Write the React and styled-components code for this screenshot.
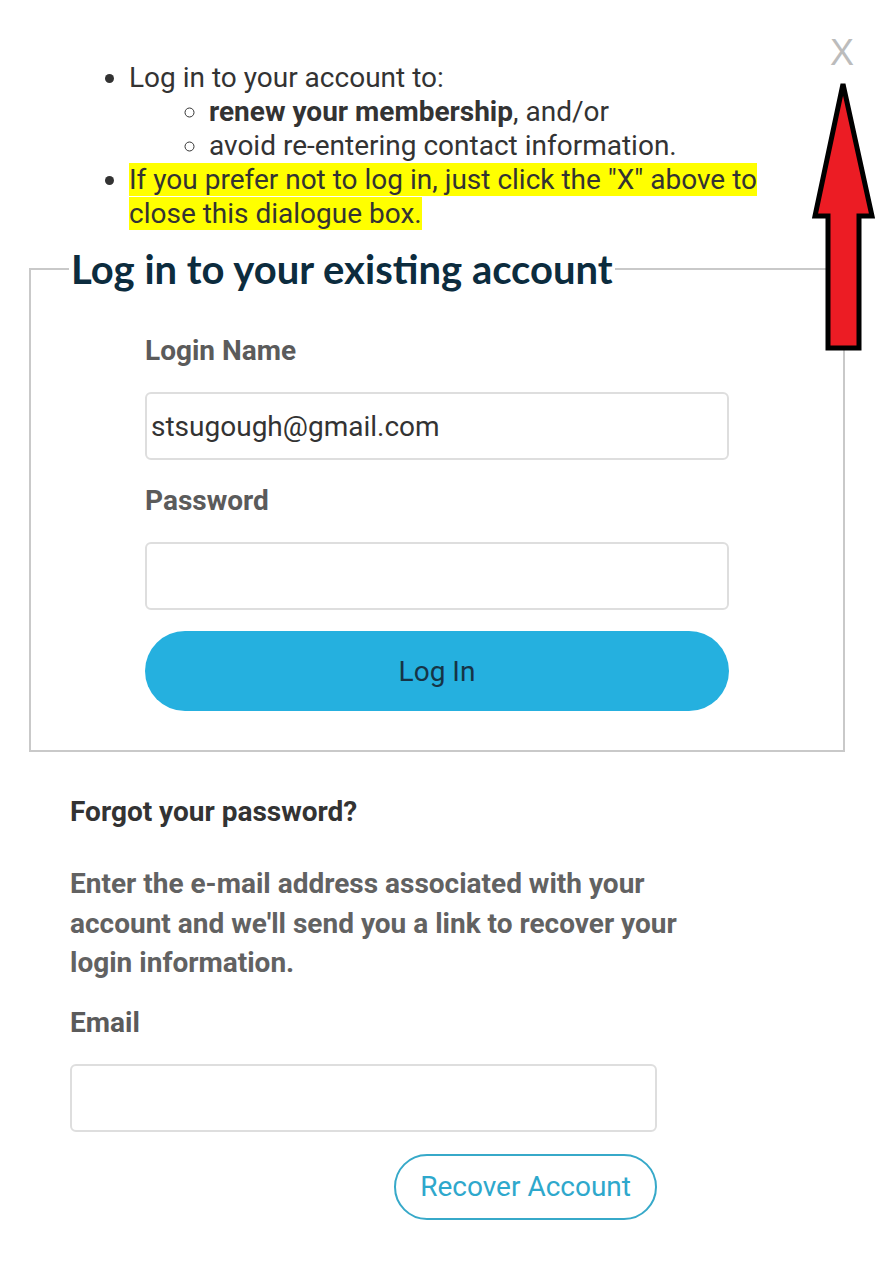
import React from "react";
import styled, { createGlobalStyle } from "styled-components";

const Global = createGlobalStyle`
  html, body { margin: 0; padding: 0; background: #fff; }
  body { font-family: Roboto, "Liberation Sans", Arial, sans-serif; }
  * { box-sizing: border-box; }
`;

const Page = styled.div`
  position: relative;
  width: 878px;
  min-height: 1282px;
  padding-top: 61px;
  overflow: hidden;
`;

const CloseX = styled.button`
  position: absolute;
  top: 30px;
  right: 24px;
  border: 0;
  background: none;
  padding: 0;
  font-family: "Liberation Sans", Arial, sans-serif;
  font-size: 36px;
  line-height: 46px;
  color: #bcbcbc;
  cursor: pointer;
`;

const ArrowWrap = styled.div`
  position: absolute;
  top: 80px;
  left: 811px;
  width: 66px;
  height: 272px;
  pointer-events: none;
`;

const IntroList = styled.ul`
  margin: 0;
  padding-left: 129px;
  padding-right: 100px;
  list-style: disc;
  font-size: 28px;
  line-height: 34px;
  color: #333;
`;

const SubList = styled.ul`
  margin: 0;
  padding-left: 80px;
  list-style: circle;
`;

const Item = styled.li``;

const Mark = styled.span`
  background: #ffff00;
`;

const Fieldset = styled.fieldset`
  margin: 15px 0 0 29px;
  width: 816px;
  border: 2px solid #c9c9c9;
  padding: 39px 0 39px 38px;
`;

const Legend = styled.legend`
  padding: 0 2px;
  font-family: Lato, "Open Sans", sans-serif;
  font-weight: 700;
  font-size: 40px;
  line-height: 46px;
  color: #0c2c3e;
`;

const FormBody = styled.div`
  width: ${(p) => p.$width}px;
  margin-left: ${(p) => p.$indent || 0}px;
  display: flex;
  flex-direction: column;
`;

const Label = styled.label`
  display: block;
  font-weight: 700;
  font-size: 28px;
  line-height: 40px;
  color: #5b5b5b;
  margin-bottom: 21px;
`;

const Input = styled.input`
  display: block;
  width: 100%;
  height: 68px;
  border: 2px solid #dedede;
  border-radius: 6px;
  padding: 0 4px;
  font-family: Roboto, sans-serif;
  font-size: 28px;
  color: #333;
  margin-bottom: 21px;
  outline: none;
`;

const PrimaryButton = styled.button`
  width: 100%;
  height: 80px;
  border: 0;
  border-radius: 40px;
  background: #25b0df;
  font-family: Roboto, sans-serif;
  font-size: 28px;
  color: #163446;
  cursor: pointer;
`;

const Recover = styled.section`
  width: 640px;
  margin: 43px 0 0 70px;
  display: flex;
  flex-direction: column;
`;

const SubHeading = styled.h3`
  margin: 0 0 35px;
  font-weight: 700;
  font-size: 28px;
  line-height: 34px;
  color: #333;
`;

const Para = styled.p`
  margin: 0 0 20px;
  font-weight: 700;
  font-size: 28px;
  line-height: 39.5px;
  color: #626262;
`;

const ActionRow = styled.div`
  display: flex;
  justify-content: flex-end;
  margin-top: 1px;
`;

const OutlineButton = styled.button`
  height: 66px;
  padding: 0 24px;
  border: 2px solid #37a9c9;
  border-radius: 33px;
  background: #fff;
  font-family: Roboto, sans-serif;
  font-size: 28px;
  color: #2ea8cc;
  cursor: pointer;
`;

function Arrow() {
  return (
    <svg width="66" height="272" viewBox="0 0 66 272">
      <path
        d="M32 4 L61 136 L48 136 L48 268 L17 268 L17 136 L4 136 Z"
        fill="#ec1c24"
        stroke="#000"
        strokeWidth="5"
        strokeLinejoin="miter"
      />
    </svg>
  );
}

export default function App() {
  return (
    <>
      <Global />
      <Page>
        <CloseX aria-label="Close">X</CloseX>
        <ArrowWrap>
          <Arrow />
        </ArrowWrap>
        <IntroList>
          <Item>
            Log in to your account to:
            <SubList>
              <Item>
                <b>renew your membership</b>, and/or
              </Item>
              <Item>avoid re-entering contact information.</Item>
            </SubList>
          </Item>
          <Item>
            <Mark>
              If you prefer not to log in, just click the "X" above to close this dialogue box.
            </Mark>
          </Item>
        </IntroList>

        <Fieldset>
          <Legend>Log in to your existing account</Legend>
          <FormBody $width={584} $indent={76}>
            <Label htmlFor="login">Login Name</Label>
            <Input id="login" defaultValue="stsugough@gmail.com" />
            <Label htmlFor="pw">Password</Label>
            <Input id="pw" type="password" />
            <PrimaryButton>Log In</PrimaryButton>
          </FormBody>
        </Fieldset>

        <Recover>
          <SubHeading>Forgot your password?</SubHeading>
          <Para>
            Enter the e-mail address associated with your account and we'll send you a link to
            recover your login information.
          </Para>
          <FormBody $width={587}>
            <Label htmlFor="email">Email</Label>
            <Input id="email" type="email" />
            <ActionRow>
              <OutlineButton>Recover Account</OutlineButton>
            </ActionRow>
          </FormBody>
        </Recover>
      </Page>
    </>
  );
}
